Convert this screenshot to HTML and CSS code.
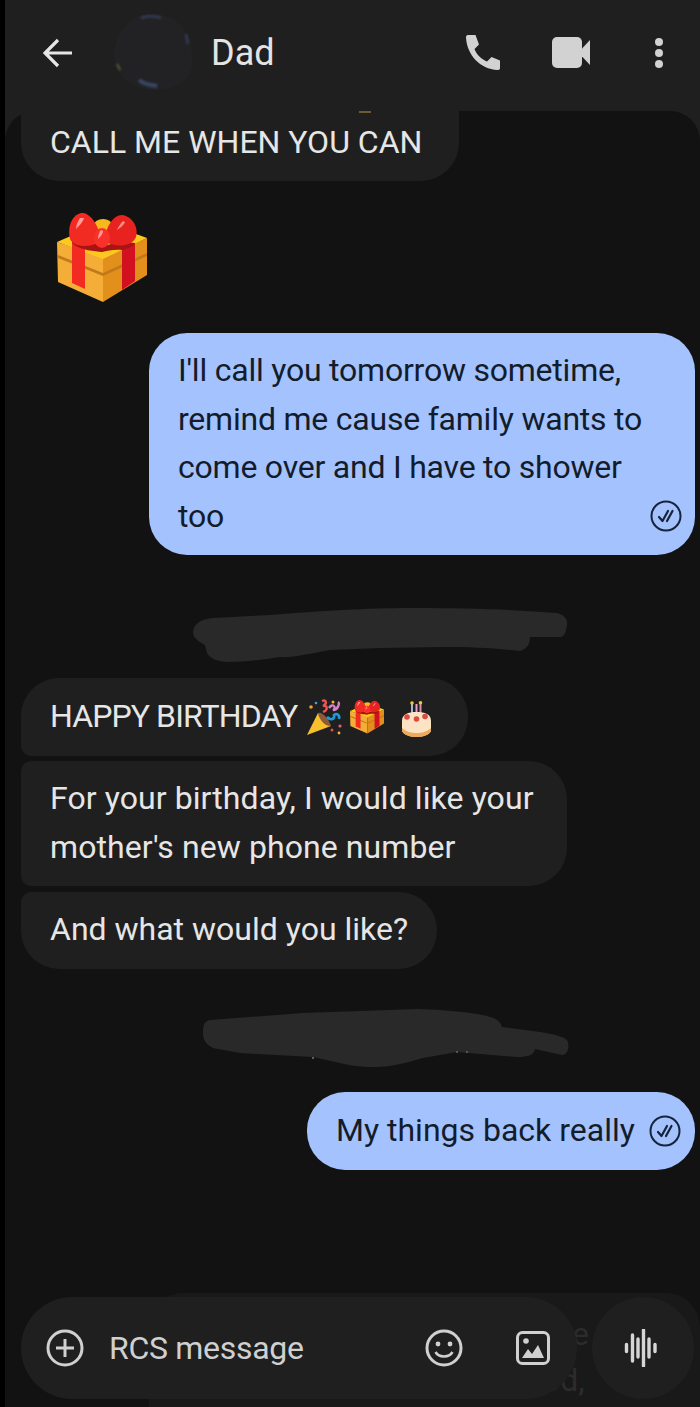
FILE: index.html
```html
<!DOCTYPE html>
<html lang="en">
<head>
    <meta charset="UTF-8">
    <meta name="viewport" content="width=device-width, initial-scale=1.0">
    <title>Dad</title>
    <link rel="stylesheet" href="styles.css">
</head>
<body>

    <!-- shared emoji and tick -->
    <svg class="defs" width="0" height="0">
        <symbol id="gift" viewBox="0 0 90 90">
            <path d="M0 29 46 45V89L1 69Z" fill="#f4ae38"/>
            <path d="M90 25 46 45V89L90 62Z" fill="#e28f1c"/>
            <path d="M0 29 46 9 90 25 46 46Z" fill="#fdc91f"/>
            <ellipse cx="46" cy="12" rx="9" ry="6" fill="#f6b81c"/>
            <path d="M1 42 46 60 90 40V43L46 63 1 45Z" fill="#c07a1a"/>
            <path d="M15 30 28 36V76L15 70Z" fill="#f22a22"/>
            <path d="M65 36 78 30V68L65 77Z" fill="#d3101f"/>
            <path d="M15 28C28 26 38 30 45 34 54 30 66 28 78 30 76 34 70 36 65 37 58 36 50 38 45 39 38 38 24 38 15 30Z" fill="#a81414"/>
            <path d="M44 28C34 35 17 35 13 26 10 14 15 2 24 0 33-1 42 12 44 28Z" fill="#f12a22"/>
            <path d="M47 28C58 35 75 34 79 24 82 13 74 3 65 2 56 2 49 14 47 28Z" fill="#e8221f"/>
            <ellipse cx="45" cy="25" rx="8" ry="10" fill="#f8322a"/>
            <path d="M23 5C21 8 19 12 19 16 22 13 26 9 27 5Z" fill="#ff9a98"/>
            <path d="M66 8C64 10 61 14 60 17 63 15 67 12 68 9Z" fill="#ff8a88"/>
            <path d="M44 17C42 19 41 23 41 26 43 24 46 21 46 18Z" fill="#ff9a98"/>
        </symbol>
        <symbol id="read" viewBox="0 0 32 32">
            <circle cx="16" cy="16" r="14.500" fill="none" stroke="#15233c" stroke-width="2"/>
            <path d="M9 17 12.500 21 18 11M17 21 22.500 11" fill="none" stroke="#15233c" stroke-width="2.200" stroke-linecap="round" stroke-linejoin="round"/>
        </symbol>
        <filter id="soft"><feGaussianBlur stdDeviation="1"/></filter>
    </svg>

    <div class="phone">
        <header class="topbar">
            <svg class="ic back" viewBox="0 0 30 30"><path d="M29 15H3M15 2 2 15 15 28" fill="none" stroke="#e6e6e6" stroke-width="3.200"/></svg>
            <svg class="avatar" viewBox="0 0 80 76">
                <path d="M28 1C48-3 66 3 73 20 78 28 81 42 79 54 75 68 60 76 42 76 24 76 8 68 3 50-2 36 3 12 28 1Z" fill="#222224"/>
                <g filter="url(#soft)" fill="none">
                    <path d="M28 4C34 2 42 2 48 4" stroke="#333d54" stroke-width="2.500"/>
                    <path d="M26 66C32 71 38 71 44 72" stroke="#3a4666" stroke-width="4"/>
                    <path d="M73 20 75 30" stroke="#2f3d52" stroke-width="2.500"/>
                    <path d="M4 50 7 56" stroke="#5d5a32" stroke-width="2"/>
                </g>
            </svg>
            <span class="contact">Dad</span>
            <div class="actions">
                <svg class="ic phone-ic" viewBox="0 0 34 35"><path d="M2 0H9.500L13 9.500 8.500 14C11 20 15 24 21 26.500L25.500 22 34 25.500V33C34 34.500 33 35 31.500 35 14 34 1 20 0 2.500 0 1 .5 0 2 0Z" fill="#d2d2d2"/></svg>
                <svg class="ic video-ic" viewBox="0 0 38 31"><rect width="30" height="31" rx="5" fill="#d2d2d2"/><path d="M30 11.500 38 3V28L30 19.500Z" fill="#d2d2d2"/></svg>
                <svg class="ic dots-ic" viewBox="0 0 10 30"><circle cx="5" cy="4" r="4" fill="#d2d2d2"/><circle cx="5" cy="15" r="4" fill="#d2d2d2"/><circle cx="5" cy="26" r="4" fill="#d2d2d2"/></svg>
            </div>
        </header>

        <main class="thread">
            <div class="msg in first">CALL ME WHEN YOU CAN</div>

            <svg class="big-gift"><use href="#gift"/></svg>

            <div class="msg out long">
                I'll call you tomorrow sometime, remind me cause family wants to come over and I have to shower too
                <svg class="tick tick-corner" viewBox="0 0 32 32"><use href="#read"/></svg>
            </div>

            <svg class="scribble scribble-a" viewBox="0 0 375 54">
                <path d="M0 24C1 14 10 11 20 10L77 7C130 3 170 0 220 0 280 0 330 2 364 5 372 7 375 12 374 17 373 26 370 29 367 29L337 29C337 36 334 41 327 43 300 40 280 39 250 39L187 40 137 42C120 45 100 50 87 49 70 52 50 54 35 54 25 54 16 50 14 45L12 37C5 33 0 30 0 24Z" fill="#292929"/>
            </svg>

            <div class="msg in group-top">
                <span class="caps">HAPPY BIRTHDAY</span>
                <span class="emoji-row">
                    <svg class="emo popper" viewBox="0 0 36 37">
                        <path d="M0 36 11 14C16 18 21 24 24 27Z" fill="#f7c02c"/>
                        <path d="M11 14C15 12 22 20 24 27 19 28 12 21 11 14Z" fill="#8a5a3a"/>
                        <path d="M15 2C20 0 20 5 16 7 21 6 21 11 16 13" fill="none" stroke="#ef5350" stroke-width="2.400"/>
                        <path d="M22 9C26 3 30 9 26 11 31 11 33 4 31 3" fill="none" stroke="#d981c6" stroke-width="2.400"/>
                        <path d="M20 18C24 22 28 20 27 16 30 14 33 16 32 20" fill="none" stroke="#1e9ad6" stroke-width="2.600"/>
                        <circle cx="4" cy="8" r="1.800" fill="#f39c33"/><circle cx="26" cy="3" r="1.500" fill="#f1b82d"/><circle cx="9" cy="4" r="1.300" fill="#3ba7e0"/><circle cx="33" cy="27" r="1.600" fill="#e0607e"/><circle cx="25" cy="31" r="1.500" fill="#e04b4b"/><circle cx="32" cy="34" r="1.400" fill="#f1b82d"/>
                    </svg>
                    <svg class="emo small-gift"><use href="#gift"/></svg>
                    <svg class="emo cake" viewBox="0 0 29 36">
                        <rect x="9" y="2" width="2" height="12" fill="#9fb7e0"/><rect x="13.500" y="3" width="2" height="12" fill="#e6a0c8"/><rect x="17.500" y="2" width="2" height="11" fill="#e08aa8"/>
                        <circle cx="10" cy="2" r="1.800" fill="#f5c33b"/><circle cx="18.500" cy="1.800" r="1.800" fill="#f5c33b"/>
                        <path d="M0 20C0 13 6 11 14.500 11S29 13 29 20V29C29 33 22 36 14.500 36S0 33 0 29Z" fill="#fbe3c4"/>
                        <path d="M0 27C4 31 10 32 14.500 32S25 31 29 27V30C27 34 21 36 14.500 36S2 34 0 30Z" fill="#eea95a"/>
                        <circle cx="5" cy="16" r="2.800" fill="#dc4a40"/><circle cx="14.500" cy="18" r="2.800" fill="#dc4a40"/><circle cx="23" cy="15.500" r="2.800" fill="#dc4a40"/>
                    </svg>
                </span>
            </div>
            <div class="msg in group-mid">For your birthday, I would like your mother's new phone number</div>
            <div class="msg in group-end">And what would you like?</div>

            <svg class="scribble scribble-b" viewBox="0 0 367 58">
                <path d="M0 24C0 15 2 12 7 11L100 4 214 0C250 1 280 5 287 8 295 10 298 14 299 18L337 23C350 25 362 28 364 31 367 36 365 46 359 46L332 40C331 46 325 48 314 48L254 43 220 49C200 55 185 58 174 58 155 58 145 56 137 54L110 48 37 44 10 39C4 36 0 32 0 24Z" fill="#292929"/>
                <circle cx="110" cy="49" r="1" fill="#777"/><circle cx="254" cy="43" r="1" fill="#666"/><circle cx="264" cy="43" r="1" fill="#666"/>
            </svg>

            <div class="msg out short">
                My things back really
                <svg class="tick" viewBox="0 0 32 32"><use href="#read"/></svg>
            </div>
        </main>

        <footer class="composer-wrap">
            <div class="ghost"><span class="ghost-e">e</span><span class="ghost-od">od,</span></div>
            <div class="composer">
                <svg class="ic plus-ic" viewBox="0 0 38 38"><circle cx="19" cy="19" r="17" fill="none" stroke="#d0d0d0" stroke-width="3"/><path d="M19 10V28M10 19H28" stroke="#d0d0d0" stroke-width="3"/></svg>
                <span class="placeholder">RCS message</span>
                <svg class="ic smile-ic" viewBox="0 0 38 38"><circle cx="19" cy="19" r="17" fill="none" stroke="#d0d0d0" stroke-width="3"/><circle cx="13" cy="15" r="2.400" fill="#d0d0d0"/><circle cx="25" cy="15" r="2.400" fill="#d0d0d0"/><path d="M10.500 23C14 29 24 29 27.500 23" fill="none" stroke="#d0d0d0" stroke-width="2.600"/></svg>
                <svg class="ic image-ic" viewBox="0 0 34 34"><rect x="1.500" y="1.500" width="31" height="31" rx="5" fill="none" stroke="#d0d0d0" stroke-width="3"/><circle cx="10" cy="10" r="2.800" fill="#d0d0d0"/><path d="M6 27 12 18 16 23 22 14 28 27Z" fill="#d0d0d0"/></svg>
            </div>
            <div class="voice">
                <svg class="ic wave-ic" viewBox="0 0 34 38"><path d="M2.500 15.500V22.500M8.500 6V32M14 10V28M19.500 1V37M25 10V28M31 15.500V22.500" fill="none" stroke="#d6d6d6" stroke-width="3.400" stroke-linecap="round"/></svg>
            </div>
        </footer>
    </div>

</body>
</html>
```

FILE: styles.css
```css
* {
    box-sizing: border-box;
}
body {
    margin: 0;
    background-color: #000;
    font-family: 'Roboto', 'Liberation Sans', sans-serif;
}
.defs {
    position: absolute;
}
.phone {
    margin-left: 5px;
    height: 1407px;
    background-color: #1f1f1f;
    display: flex;
    flex-direction: column;
    overflow: hidden;
}
.ic {
    display: block;
    flex: none;
}

/* top bar */
.topbar {
    height: 111px;
    flex: none;
    display: flex;
    align-items: flex-start;
    position: relative;
}
.back {
    width: 30px;
    height: 30px;
    margin: 38px 0 0 38px;
}
.avatar {
    width: 80px;
    height: 76px;
    margin: 14px 0 0 40px;
}
.contact {
    margin: 32px 0 0 18px;
    font-size: 36px;
    line-height: 42px;
    color: #e4e4e4;
}
.actions {
    margin-left: auto;
    display: flex;
    align-items: center;
    padding: 35px 36px 0 0;
}
.phone-ic {
    width: 34px;
    height: 35px;
}
.video-ic {
    width: 38px;
    height: 31px;
    margin-left: 52px;
}
.dots-ic {
    width: 10px;
    height: 30px;
    margin-left: 64px;
}

/* messages */
.thread {
    flex: 1;
    background-color: #121212;
    border-radius: 30px 30px 0 0;
    padding: 0 0 0 16px;
    display: flex;
    flex-direction: column;
    align-items: flex-start;
}
.msg {
    font-size: 32px;
    line-height: 48.500px;
    padding: 15px 29px;
    border-radius: 38px;
    white-space: nowrap;
}
.msg.in {
    background-color: #1f1f1f;
    color: #e6e6e6;
}
.msg.out {
    background-color: #a4c2fd;
    color: #131c2b;
    align-self: flex-end;
    margin-right: 5px;
    white-space: normal;
}
.first {
    position: relative;
    padding-top: 7px;
    padding-bottom: 15px;
    border-radius: 0 0 38px 38px;
    width: 438px;
    height: 70px;
}
.first::before {
    content: "";
    position: absolute;
    left: 338px;
    top: 0;
    width: 12px;
    height: 2px;
    background-color: #6b5a33;
}
.big-gift {
    width: 90px;
    height: 90px;
    margin: 32px 0 0 36px;
}
.long {
    width: 546px;
    height: 222px;
    margin-top: 30px;
    padding: 13px 29px;
    letter-spacing: -0.220px;
    position: relative;
}
.tick {
    width: 32px;
    height: 32px;
    flex: none;
}
.tick-corner {
    position: absolute;
    right: 13px;
    bottom: 23px;
}
.scribble {
    display: block;
}
.scribble-a {
    width: 375px;
    height: 54px;
    margin: 53px 0 0 172px;
}
.scribble-b {
    width: 367px;
    height: 58px;
    margin: 40px 0 0 182px;
}
.group-top {
    margin-top: 16px;
    width: 447px;
    height: 78px;
    padding: 13px 29px 15px;
    border-radius: 38px 38px 38px 10px;
    display: flex;
    align-items: center;
}
.caps {
    letter-spacing: -0.900px;
}
.group-mid {
    margin-top: 5px;
    width: 546px;
    height: 125px;
    padding: 13px 29px;
    letter-spacing: 0.080px;
    border-radius: 10px 38px 38px 10px;
    white-space: normal;
}
.group-end {
    margin-top: 6px;
    width: 416px;
    height: 77px;
    padding: 13px 29px;
    border-radius: 10px 38px 38px 38px;
}
.short {
    margin-top: 25px;
    width: 388px;
    height: 78px;
    display: flex;
    align-items: center;
    justify-content: space-between;
    padding: 13px 14px 15px 29px;
}
.short .tick {
    margin-top: 2px;
}
.emoji-row {
    display: flex;
    align-items: flex-start;
    margin: 3px 0 0 10px;
}
.emo {
    display: block;
    flex: none;
}
.popper {
    width: 36px;
    height: 37px;
}
.small-gift {
    width: 34px;
    height: 36px;
    margin-left: 7px;
}
.cake {
    width: 29px;
    height: 36px;
    margin: 2px 0 0 18px;
}

/* composer */
.composer-wrap {
    flex: none;
    height: 110px;
    margin-top: -110px;
    padding: 0 0 8px 16px;
    position: relative;
    display: flex;
    align-items: flex-end;
}
.ghost {
    position: absolute;
    left: 144px;
    right: 0;
    top: -4px;
    height: 120px;
    background-color: #191919;
    border-radius: 34px 34px 0 0;
    color: #2c2c2c;
    font-size: 32px;
}
.ghost-e {
    position: absolute;
    left: 423px;
    top: 22px;
}
.ghost-od {
    position: absolute;
    left: 393px;
    top: 68px;
}
.composer {
    position: relative;
    width: 556px;
    height: 102px;
    background-color: #1f1f1f;
    border-radius: 51px;
    display: flex;
    align-items: center;
    padding-left: 25px;
}
.plus-ic {
    width: 38px;
    height: 38px;
}
.placeholder {
    margin-left: 25px;
    font-size: 32px;
    letter-spacing: -0.300px;
    color: #d0d0d0;
}
.smile-ic {
    width: 38px;
    height: 38px;
    margin-left: auto;
}
.image-ic {
    width: 34px;
    height: 34px;
    margin: 0 27px 0 53px;
}
.voice {
    position: relative;
    width: 102px;
    height: 102px;
    flex: none;
    margin-left: 15px;
    background-color: #1f1f1f;
    border-radius: 50%;
    display: flex;
    align-items: center;
    padding-left: 32px;
}
.wave-ic {
    width: 34px;
    height: 38px;
}
```
